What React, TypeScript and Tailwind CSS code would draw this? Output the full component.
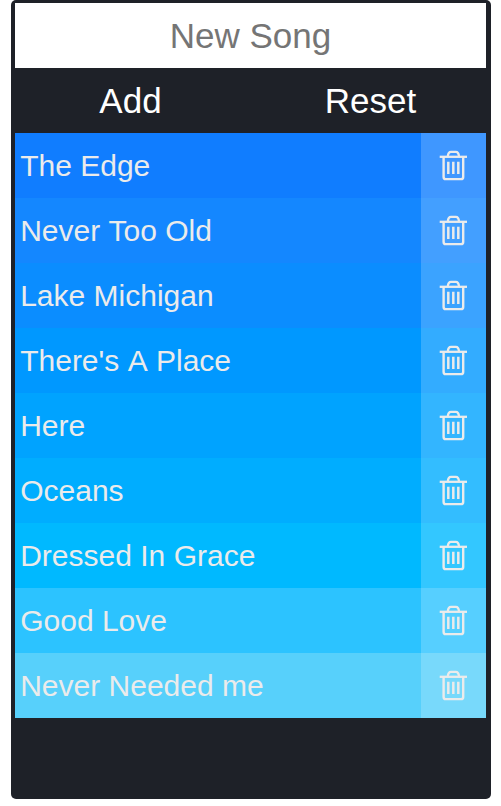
import { Fragment } from 'react';

const songs = [
  { title: 'The Edge', color: 'bg-[#107dff]' },
  { title: 'Never Too Old', color: 'bg-[#1487ff]' },
  { title: 'Lake Michigan', color: 'bg-[#0b8dff]' },
  { title: "There's A Place", color: 'bg-[#0098ff]' },
  { title: 'Here', color: 'bg-[#00a3ff]' },
  { title: 'Oceans', color: 'bg-[#00adff]' },
  { title: 'Dressed In Grace', color: 'bg-[#00b9ff]' },
  { title: 'Good Love', color: 'bg-[#2cc3ff]' },
  { title: 'Never Needed me', color: 'bg-[#57d0fb]' },
];

function TrashIcon() {
  return (
    <svg width="31" height="31" viewBox="0 0 31 31" fill="none" stroke="#ebebeb" strokeWidth="2.3">
      <path d="M1.7 6.8H29" />
      <path d="M9.8 6.8C10 3.5 11 1.9 13 1.9H17.8C19.8 1.9 20.8 3.5 21 6.8" />
      <path d="M5.6 7V26.9Q5.6 29.1 7.8 29.1H23Q25.2 29.1 25.2 26.9V7" strokeWidth="2.4" />
      <path d="M10.3 11.8V24M15.3 11.8V24M20.3 11.8V24" strokeWidth="2.5" />
    </svg>
  );
}

/* Each word is its own box, so no kerning is applied across spaces. */
function Title({ text }: { text: string }) {
  return (
    <span className="flex-1 pl-[5.2px]">
      {text.split(' ').map((word, i) => (
        <Fragment key={i}>
          {i > 0 && ' '}
          <span className="inline-block">{word}</span>
        </Fragment>
      ))}
    </span>
  );
}

export default function App() {
  return (
    <div className="h-[806px] w-[501px] overflow-hidden bg-white pl-[11px] font-['Liberation_Sans',Arial,sans-serif]">
      <main className="h-[799px] w-[480px] rounded-[5px] bg-[#1e2128] pt-[3px] pr-[5px] pl-1">
        <input
          placeholder="New Song"
          className="block h-[65px] w-full rounded-none bg-white text-center text-[35px] text-black outline-none placeholder:text-[#757575]"
        />
        <div className="flex h-[65px] pt-0.5 text-[35px] text-white">
          <button className="w-[231px]">Add</button>
          <button className="flex-1 pl-[9px]">Reset</button>
        </div>
        <ul>
          {songs.map((song) => (
            <li key={song.title} className={`flex h-[65px] items-center text-[30px] text-[#ebebeb] ${song.color}`}>
              <Title text={song.title} />
              <button className="flex h-full w-[65px] items-center justify-center bg-white/20">
                <TrashIcon />
              </button>
            </li>
          ))}
        </ul>
      </main>
    </div>
  );
}
